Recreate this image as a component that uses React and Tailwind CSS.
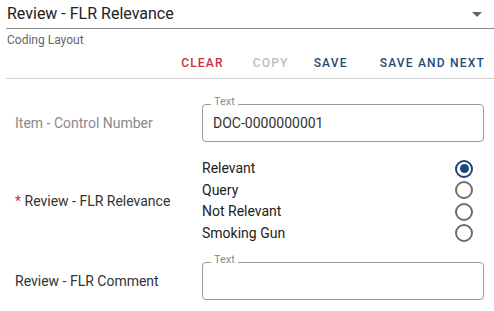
import { useState } from "react";

const TextField = ({ value }) => (
  <div className="relative w-[282px] h-[38px] rounded-[4px] border border-[#9a9a9a] flex items-center px-[10px]">
    <span className="absolute left-[8px] top-[-10px] px-[3px] bg-white text-[11px] leading-[14px] text-[#8c8c8c]">
      Text
    </span>
    <span className="text-[14px] text-[#333]">{value}</span>
  </div>
);

const Radio = ({ checked }) =>
  checked ? (
    <span className="w-[18px] h-[18px] rounded-full border-2 border-[#1b4677] flex items-center justify-center">
      <span className="w-[9px] h-[9px] rounded-full bg-[#1b4677]" />
    </span>
  ) : (
    <span className="w-[18px] h-[18px] rounded-full border-2 border-[#6e6e6e]" />
  );

const options = ["Relevant", "Query", "Not Relevant", "Smoking Gun"];

export default function App() {
  const [selected, setSelected] = useState("Relevant");

  return (
    <div className="w-[494px] h-[311px] bg-white overflow-hidden font-['Roboto',sans-serif]">
      <div className="ml-[6px] h-[29px] border-b border-[#8a8a8a] flex items-center justify-between pl-[1px] pr-[12px]">
        <span className="text-[16px] leading-6 text-[#222]">Review - FLR Relevance</span>
        <svg width="10" height="5" viewBox="0 0 10 5">
          <path d="M0 0 L10 0 L5 5 Z" fill="#666" />
        </svg>
      </div>

      <div className="ml-[7px] mt-[3px] text-[12px] leading-4 text-[#666]">Coding Layout</div>

      <div className="ml-[6px] h-[31px] border-b border-[#d4d4d4] flex items-center justify-end pr-[9px] text-[12px] font-medium tracking-[1.2px]">
        <button className="text-[#c8303f]">CLEAR</button>
        <button className="ml-[29px] text-[#bdbdbd]">COPY</button>
        <button className="ml-[25px] text-[#1d4a7c]">SAVE</button>
        <button className="ml-[32px] text-[#1d4a7c]">SAVE AND NEXT</button>
      </div>

      <div className="pl-[15px]">
        <div className="mt-[25px] flex items-center">
          <span className="w-[187px] text-[14px] text-[#8a8a8a]">Item - Control Number</span>
          <TextField value="DOC-0000000001" />
        </div>

        <div className="mt-[16px] flex items-center">
          <span className="w-[187px] text-[14px] text-[#333]">
            <span className="text-[#d0323f]">*</span> Review - FLR Relevance
          </span>
          <div className="w-[282px] flex flex-col pr-[11px]">
            {options.map((o) => (
              <div
                key={o}
                onClick={() => setSelected(o)}
                className="h-[21.5px] flex items-center justify-between text-[14px] text-[#222] cursor-pointer"
              >
                <span>{o}</span>
                <Radio checked={selected === o} />
              </div>
            ))}
          </div>
        </div>

        <div className="mt-[18px] flex items-center">
          <span className="w-[187px] text-[14px] text-[#333]">Review - FLR Comment</span>
          <TextField value="" />
        </div>
      </div>
    </div>
  );
}
